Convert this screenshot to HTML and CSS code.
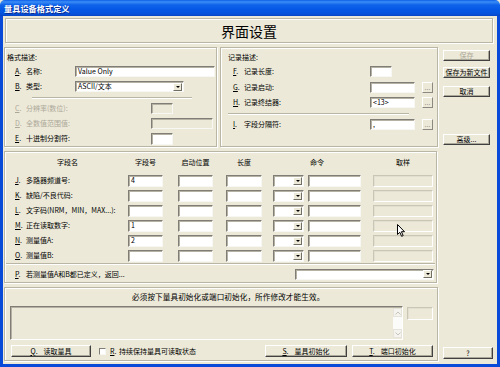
FILE: index.html
```html
<!DOCTYPE html>
<html lang="zh-CN">
<head>
<meta charset="utf-8">
<title>量具设备格式定义</title>
<link rel="stylesheet" href="styles.css">
</head>
<body>
<div class="window">
  <div class="titlebar">量具设备格式定义</div>
  <div class="client">
    <div class="banner">界面设置</div>
    <div class="main">
      <div class="leftcol">
        <div class="toprow">
          <section class="group fmt">
            <div class="gtitle">格式描述:</div>
            <div class="row">
              <span class="lab lab-a"><span class="key"><u>A</u>.</span>名称:</span>
              <span class="input w140">Value Only</span>
            </div>
            <div class="row">
              <span class="lab lab-a"><span class="key"><u>B</u>.</span>类型:</span>
              <span class="select w109"><span class="seltext">ASCII/文本</span><span class="arrow"></span></span>
            </div>
            <div class="sepwrap"><div class="sep sep-fmt"></div></div>
            <div class="row dis">
              <span class="lab lab-c"><span class="key"><u>C</u>.</span>分辨率(数位):</span>
              <span class="input off w22"></span>
            </div>
            <div class="row dis">
              <span class="lab lab-c"><span class="key"><u>D</u>.</span>全数值范围值:</span>
              <span class="input off w62"></span>
            </div>
            <div class="row">
              <span class="lab lab-c"><span class="key"><u>E</u>.</span>十进制分割符:</span>
              <span class="input w22 h12"></span>
            </div>
          </section>
          <section class="group rec">
            <div class="gtitle">记录描述:</div>
            <div class="row">
              <span class="lab lab-r"><span class="key"><u>F</u>.</span>记录长度:</span>
              <span class="input w22"></span>
            </div>
            <div class="row r16">
              <span class="lab lab-r"><span class="key"><u>G</u>.</span>记录启动:</span>
              <span class="input w45"></span>
              <span class="dots">...</span>
            </div>
            <div class="row">
              <span class="lab lab-r"><span class="key"><u>H</u>.</span>记录终结器:</span>
              <span class="input w45">&lt;13&gt;</span>
              <span class="dots">...</span>
            </div>
            <div class="sepwrap"><div class="sep sep-rec"></div></div>
            <div class="row">
              <span class="lab lab-r"><span class="key"><u>I</u>.</span>字段分隔符:</span>
              <span class="input w45">,</span>
              <span class="dots">...</span>
            </div>
          </section>
        </div>

        <section class="group fields">
          <div class="thead">
            <span class="h-name">字段名</span>
            <span class="c-num">字段号</span>
            <span class="c-start">启动位置</span>
            <span class="c-len">长度</span>
            <span class="h-cmd">命令</span>
            <span class="c-samp">取样</span>
          </div>
          <div class="trow">
            <span class="lab c-name"><span class="key"><u>J</u>.</span>多路器频道号:</span>
            <span class="input c-num">4</span>
            <span class="input c-start"></span>
            <span class="input c-len"></span>
            <span class="select c-sel"><span class="seltext"></span><span class="arrow"></span></span>
            <span class="input c-cmd"></span>
            <span class="etch c-samp"></span>
          </div>
          <div class="trow">
            <span class="lab c-name"><span class="key"><u>K</u>.</span>缺陷/不良代码:</span>
            <span class="input c-num"></span>
            <span class="input c-start"></span>
            <span class="input c-len"></span>
            <span class="select c-sel"><span class="seltext"></span><span class="arrow"></span></span>
            <span class="input c-cmd"></span>
            <span class="etch c-samp"></span>
          </div>
          <div class="trow">
            <span class="lab c-name"><span class="key"><u>L</u>.</span>文字码(NRM，MIN，MAX...):</span>
            <span class="input c-num"></span>
            <span class="input c-start"></span>
            <span class="input c-len"></span>
            <span class="select c-sel"><span class="seltext"></span><span class="arrow"></span></span>
            <span class="input c-cmd"></span>
            <span class="etch c-samp"></span>
          </div>
          <div class="trow">
            <span class="lab c-name"><span class="key"><u>M</u>.</span>正在读取数字:</span>
            <span class="input c-num">1</span>
            <span class="input c-start"></span>
            <span class="input c-len"></span>
            <span class="select c-sel"><span class="seltext"></span><span class="arrow"></span></span>
            <span class="input c-cmd"></span>
            <span class="etch c-samp"></span>
          </div>
          <div class="trow">
            <span class="lab c-name"><span class="key"><u>N</u>.</span>测量值A:</span>
            <span class="input c-num">2</span>
            <span class="input c-start"></span>
            <span class="input c-len"></span>
            <span class="select c-sel"><span class="seltext"></span><span class="arrow"></span></span>
            <span class="input c-cmd"></span>
            <span class="etch c-samp"></span>
          </div>
          <div class="trow">
            <span class="lab c-name"><span class="key"><u>O</u>.</span>测量值B:</span>
            <span class="input c-num"></span>
            <span class="input c-start"></span>
            <span class="input c-len"></span>
            <span class="select c-sel"><span class="seltext"></span><span class="arrow"></span></span>
            <span class="input c-cmd"></span>
            <span class="etch c-samp"></span>
          </div>
          <div class="tsep"></div>
          <div class="prow">
            <span class="lab"><span class="key"><u>P</u>.</span>若测量值A和B都已定义，返回...</span>
            <span class="select w139"><span class="seltext"></span><span class="arrow"></span></span>
          </div>
        </section>

        <section class="group status">
          <div class="msg">必须按下量具初始化或端口初始化，所作修改才能生效。</div>
          <div class="logrow">
            <div class="log">
              <div class="logtext"></div>
              <div class="vscroll">
                <span class="sbtn"><svg width="6" height="4" viewBox="0 0 6 4"><polyline points="0.5,3.5 3,1 5.5,3.5" fill="none" stroke="#c8c6bc" stroke-width="1"/></svg></span>
                <span class="strack"></span>
                <span class="sbtn"><svg width="6" height="4" viewBox="0 0 6 4"><polyline points="0.5,0.5 3,3 5.5,0.5" fill="none" stroke="#c8c6bc" stroke-width="1"/></svg></span>
              </div>
            </div>
            <span class="etch smallbox"></span>
          </div>
          <div class="btnrow">
            <span class="btn b-read"><span class="key2"><u>Q</u>.</span>读取量具</span>
            <span class="check"></span>
            <span class="chklabel"><span class="key"><u>R</u>.</span>持续保持量具可读取状态</span>
            <span class="btn b-init"><span class="key2"><u>S</u>.</span>量具初始化</span>
            <span class="btn b-port"><span class="key2"><u>T</u>.</span>端口初始化</span>
          </div>
        </section>
      </div>

      <div class="rightcol">
        <span class="btn b-save disabled">保存</span>
        <span class="btn b-saveas">保存为新文件</span>
        <span class="btn b-cancel">取消</span>
        <span class="btn b-adv">高级...</span>
        <span class="btn b-help">?</span>
      </div>
    </div>
  </div>
  <svg class="cursor" width="9" height="13" viewBox="0 0 9 13"><path d="M0.5 0.5 L0.5 10.5 L2.8 8.3 L4.6 12.3 L6.2 11.6 L4.4 7.7 L7.5 7.7 Z" fill="#fff" stroke="#000" stroke-width="1" stroke-linejoin="miter"/></svg>
</div>
</body>
</html>
```

FILE: styles.css
```css
* { box-sizing: border-box; margin: 0; padding: 0; }
html, body { width: 500px; height: 367px; overflow: hidden; }
body {
  font-family: "Noto Sans CJK SC", "Noto Sans", sans-serif;
  font-size: 7px;
  line-height: 1;
  color: #000;
  background: #ece9d8;
}
u { text-decoration: underline; }

.window {
  position: relative;
  width: 500px;
  height: 367px;
  display: flex;
  flex-direction: column;
}
.titlebar {
  flex: none;
  height: 16px;
  padding-left: 4px;
  display: flex;
  align-items: center;
  color: #fff;
  font-weight: 700;
  font-size: 8.2px;
  text-shadow: 1px 1px 0 #0c2a8c;
  border-radius: 5px 5px 0 0;
  background: linear-gradient(to bottom, #0a5fe8 0%, #3d8df6 12%, #0f63ea 30%, #0558e5 60%, #0553dd 85%, #0745c4 100%);
}
.client {
  flex: 1;
  display: flex;
  flex-direction: column;
  min-height: 0;
  background: #ece9d8;
  border: 3px solid #0a4ad8;
  border-top: 0;
}
.banner {
  flex: none;
  height: 25px;
  margin: 2px 4px 0 2px;
  display: flex;
  align-items: center;
  justify-content: center;
  font-size: 14px;
  border: 1px solid #b9b6a6;
  box-shadow: inset 1px 1px 0 #fff, 1px 1px 0 #fff;
}
.main {
  flex: 1;
  display: flex;
  margin-top: 4px;
  min-height: 0;
}
.leftcol {
  flex: none;
  width: 434px;
  margin-left: 1px;
  display: flex;
  flex-direction: column;
}
.rightcol {
  flex: none;
  width: 50px;
  margin-left: 5px;
  display: flex;
  flex-direction: column;
  align-items: flex-start;
}

/* group boxes */
.group {
  border: 1px solid #b9b6a6;
  box-shadow: inset 1px 1px 0 #fff, 1px 1px 0 #fff;
}
.toprow { flex: none; height: 100px; display: flex; }
.fmt { width: 213px; height: 100px; padding-top: 2px; }
.rec { width: 218px; height: 100px; margin-left: 3px; padding-top: 2px; }
.gtitle { height: 14px; display: flex; align-items: center; }
.fmt .gtitle { padding-left: 2px; }
.rec .gtitle { padding-left: 7px; }

.row { height: 15px; display: flex; align-items: center; }
.row.r16 { height: 16px; }
.fmt .row { padding-left: 10px; }
.rec .row { padding-left: 12px; }

.lab { flex: none; display: flex; align-items: center; white-space: nowrap; }
.key { flex: none; width: 11px; }
.key2 { margin-right: 6px; }
.lab-a { width: 60px; }
.lab-c { width: 136px; }
.lab-r { width: 137px; }
.dis .lab { color: #aca899; }

.sepwrap { height: 7px; display: flex; align-items: center; }
.sep { height: 2px; border-top: 1px solid #b9b6a6; border-bottom: 1px solid #fff; }
.sep-fmt { margin-left: 27px; width: 160px; }
.sep-rec { margin-left: 7px; width: 181px; }

/* controls */
.input {
  flex: none;
  display: flex;
  align-items: center;
  height: 11px;
  padding-left: 2px;
  font-size: 7px;
  white-space: nowrap;
  background: #fff;
  border: 1px solid;
  border-color: #7f7d75 #f7f7f4 #f7f7f4 #7f7d75;
  box-shadow: inset 1px 1px 0 #b5b2a3;
}
.input.off { background: #ece9d8; }
.w22 { width: 22px; }
.w45 { width: 45px; }
.w62 { width: 62px; }
.w109 { width: 109px; }
.w139 { width: 139px; }
.w140 { width: 140px; }
.h12 { height: 12px; }

.select {
  flex: none;
  display: flex;
  align-items: center;
  height: 11px;
  background: #fff;
  border: 1px solid;
  border-color: #7f7d75 #f7f7f4 #f7f7f4 #7f7d75;
  box-shadow: inset 1px 1px 0 #b5b2a3;
}
.seltext { flex: 1; padding-left: 2px; white-space: nowrap; }
.arrow {
  flex: none;
  position: relative;
  width: 9px;
  height: 8px;
  margin-right: 1px;
  background: #ece9d8;
  border: 1px solid;
  border-color: #fff #716f64 #716f64 #fff;
}
.arrow::after {
  content: "";
  position: absolute;
  left: 1.5px;
  top: 2px;
  border-left: 2.5px solid transparent;
  border-right: 2.5px solid transparent;
  border-top: 2.5px solid #000;
}

.dots {
  flex: none;
  width: 11px;
  height: 11px;
  margin-left: 7px;
  display: flex;
  align-items: center;
  justify-content: center;
  color: #6f6d64;
  font-family: "Liberation Sans", sans-serif;
  font-size: 7px;
  line-height: 7px;
  letter-spacing: 0;
  border: 1px solid;
  border-color: #fff #8c8a80 #8c8a80 #fff;
  background: #ece9d8;
}

.etch {
  flex: none;
  height: 12px;
  border: 1px solid;
  border-color: #c9c6b6 #fff #fff #c9c6b6;
  box-shadow: inset 1px 1px 0 #e2dfd1;
  background: #ece9d8;
}

.btn {
  flex: none;
  display: flex;
  align-items: center;
  justify-content: center;
  height: 11px;
  width: 47px;
  white-space: nowrap;
  background: #ece9d8;
  border: 1px solid;
  border-color: #fff #404040 #404040 #fff;
  box-shadow: inset -1px -1px 0 #aca899;
}
.btn.disabled { color: #aca899; }
.b-save { margin-top: 3px; }
.b-saveas { margin-top: 6px; }
.b-cancel { margin-top: 8px; }
.b-adv { margin-top: 37px; }
.b-help { margin-top: auto; margin-bottom: 5px; width: 50px; height: 12px; }

/* fields table */
.fields { flex: none; width: 433px; height: 132px; margin-top: 4px; }
.thead { height: 21px; display: flex; align-items: center; padding-left: 10px; }
.thead > span { flex: none; text-align: center; }
.h-name { width: 113px; padding-right: 8px; }
.h-cmd { width: 88px; margin-left: 11px; }
.trow { height: 15px; display: flex; align-items: center; padding-left: 10px; }
.trow .input, .trow .select { height: 12px; }
.c-name { width: 113px; }
.c-num { width: 35px; }
.c-start { width: 35px; margin-left: 15px; }
.c-len { width: 36px; margin-left: 13px; }
.c-sel { width: 31px; margin-left: 11px; }
.c-cmd { width: 53px; margin-left: 4px; }
.c-samp { width: 60px; margin-left: 12px; }
.tsep {
  height: 2px;
  margin: 0 1px;
  border-top: 1px solid #b9b6a6;
  border-bottom: 1px solid #fff;
}
.prow {
  height: 18px;
  display: flex;
  align-items: center;
  justify-content: space-between;
  padding-left: 10px;
  padding-right: 2px;
}

/* status box */
.status { flex: none; width: 434px; height: 74px; margin-top: 4px; }
.msg { height: 18px; display: flex; align-items: center; padding-left: 127px; font-size: 7.6px; letter-spacing: 0.1px; }
.logrow { height: 34px; display: flex; align-items: flex-start; }
.log {
  flex: none;
  width: 393px;
  height: 34px;
  margin-left: 5px;
  display: flex;
  border: 1px solid;
  border-color: #7f7d75 #fff #fff #7f7d75;
  box-shadow: inset 1px 1px 0 #b5b2a3;
  background: #ece9d8;
}
.logtext { flex: 1; }
.vscroll { flex: none; width: 9px; display: flex; flex-direction: column; margin: 1px 0; }
.sbtn {
  flex: none;
  height: 9px;
  display: flex;
  align-items: center;
  justify-content: center;
  background: #f4f3ee;
  border: 1px solid #e6e4da;
}
.strack { flex: 1; background: #fbfbf9; }
.smallbox { width: 26px; height: 13px; margin-left: 4px; margin-top: 1px; }

.btnrow { height: 12px; margin-top: 5px; display: flex; align-items: center; }
.btnrow .btn { height: 12px; }
.b-read { width: 80px; margin-left: 6px; }
.check {
  flex: none;
  width: 7px;
  height: 7px;
  margin-left: 8px;
  background: #fff;
  border: 1px solid;
  border-color: #7f7d75 #f7f7f4 #f7f7f4 #7f7d75;
}
.chklabel { display: flex; align-items: center; margin-left: 4px; white-space: nowrap; }
.chklabel .key { width: 9px; }
.b-init { width: 82px; margin-left: auto; }
.b-port { width: 81px; margin-left: 5px; margin-right: 4px; }

.cursor { position: absolute; left: 397px; top: 224px; }
```
